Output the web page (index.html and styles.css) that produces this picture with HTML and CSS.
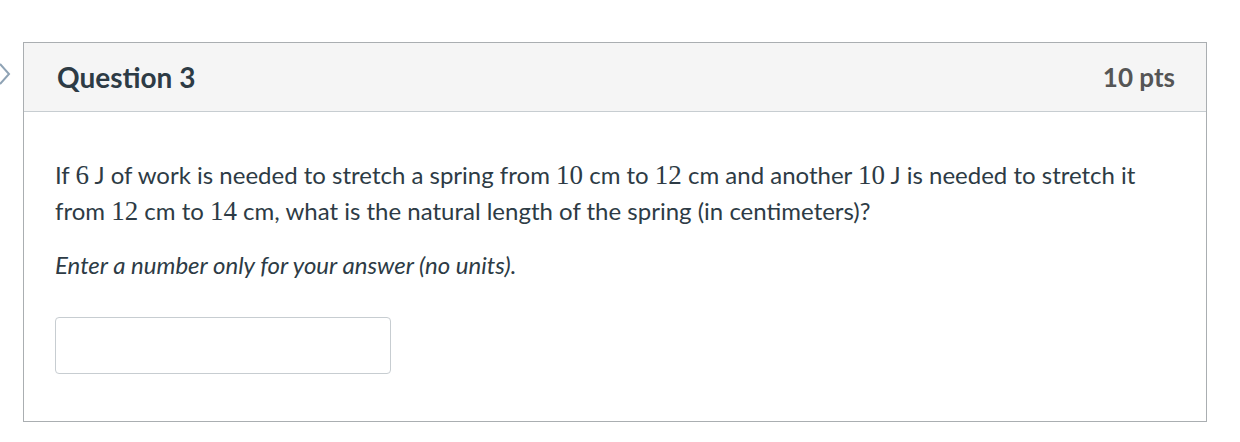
FILE: index.html
```html
<!DOCTYPE html>
<html>
<head>
<meta charset="utf-8">
<link rel="stylesheet" href="styles.css">
</head>
<body>
<div class="page">
  <svg class="nav-arrow" width="14" height="24" viewBox="0 0 14 24"><path d="M1 2 L10 12 L1 22" fill="none" stroke="#8fa3b5" stroke-width="2"/></svg>
  <div class="question">
    <div class="q-header">
      <h2 class="q-title">Question 3</h2>
      <span class="q-pts">10 pts</span>
    </div>
    <div class="q-body">
      <p class="q-text">If <span class="m">6</span> J of work is needed to stretch a spring from <span class="m">10</span> cm to <span class="m">12</span> cm and another <span class="m">10</span> J is needed to stretch it from <span class="m">12</span> cm to <span class="m">14</span> cm, what is the natural length of the spring (in centimeters)?</p>
      <p class="q-note">Enter a number only for your answer (no units).</p>
      <div class="answer"><input class="answer-input" type="text"></div>
    </div>
  </div>
</div>
</body>
</html>
```
FILE: styles.css
```css
html, body {
  margin: 0;
  padding: 0;
  background: #fff;
}
body {
  font-family: Lato, "Liberation Sans", sans-serif;
  color: #2d3b45;
}
.page {
  position: relative;
  padding: 42px 0 0 23px;
}
.nav-arrow {
  position: absolute;
  left: -1px;
  top: 62px;
}
.question {
  width: 1182px;
  border: 1px solid #aaaeb1;
}
.q-header {
  display: flex;
  justify-content: space-between;
  align-items: center;
  height: 68px;
  padding: 0 31px 0 33px;
  background: #f5f5f5;
  border-bottom: 1px solid #c7cdd1;
}
.q-title {
  margin: 0;
  font-size: 28px;
  font-weight: 700;
  color: #2d3b45;
}
.q-pts {
  font-size: 26px;
  font-weight: 700;
  color: #555;
}
.q-body {
  padding: 45px 31px 47px 31px;
}
.q-text {
  margin: 0;
  font-size: 24px;
  line-height: 36px;
}
.m {
  font-family: "Liberation Serif", serif;
  font-size: 27px;
  line-height: 1;
}
.q-note {
  margin: 18px 0 0 0;
  font-size: 24px;
  font-style: italic;
  line-height: 36px;
}
.answer {
  margin-top: 34px;
}
.answer-input {
  display: block;
  box-sizing: border-box;
  width: 336px;
  height: 57px;
  border: 1px solid #c7cdd1;
  border-radius: 4px;
  background: #fff;
  margin: 0;
}
```
